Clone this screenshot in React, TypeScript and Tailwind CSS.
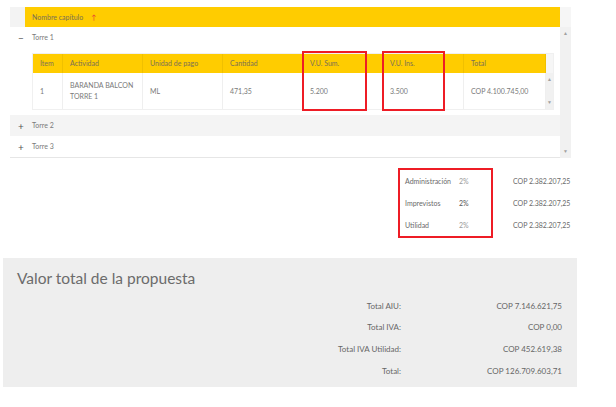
import React from "react";

const cols = [
  { title: "Item", w: "w-[30px]" },
  { title: "Actividad", w: "w-[80px]" },
  { title: "Unidad de pago", w: "w-[80px]" },
  { title: "Cantidad", w: "w-[80px]" },
  { title: "V.U. Sum.", w: "w-[80px]" },
  { title: "V.U. Ins.", w: "w-[81px]" },
  { title: "Total", w: "w-[82px]" },
];

const rowValues = ["1", "BARANDA BALCON TORRE 1", "ML", "471,35", "5.200", "3.500", "COP 4.100.745,00"];

const aiu = [
  { label: "Administración", pct: "2%", value: "COP 2.382.207,25" },
  { label: "Imprevistos", pct: "2%", value: "COP 2.382.207,25" },
  { label: "Utilidad", pct: "2%", value: "COP 2.382.207,25" },
];

const totals = [
  { label: "Total AIU:", value: "COP 7.146.621,75" },
  { label: "Total IVA:", value: "COP 0,00" },
  { label: "Total IVA Utilidad:", value: "COP 452.619,38" },
  { label: "Total:", value: "COP 126.709.603,71" },
];

function ScrollBar({ className }: { className?: string }) {
  return (
    <div className={`flex flex-col items-center justify-between bg-[#f1f1f1] ${className ?? ""}`}>
      <span className="text-[5px] leading-none text-[#a0a0a0]">▲</span>
      <span className="text-[5px] leading-none text-[#a0a0a0]">▼</span>
    </div>
  );
}

export default function App() {
  return (
    <div className="w-[616px] h-[407px] bg-white overflow-hidden text-[#7a7a7a]" style={{ fontFamily: "Lato, 'Open Sans', sans-serif" }}>
      {/* Capítulos */}
      <div className="ml-[10px] mt-[7px] w-[561px] flex">
        <div className="w-[550px] border-b border-[#e6e6e6]">
          <div className="flex h-[20px]">
            <div className="w-[15px] bg-[#f3f3f3]" />
            <div className="flex-1 bg-[#ffcc00] flex items-center pl-[7px] text-[7px] text-[#7a7056]">
              Nombre capítulo <span className="ml-[8px] text-[#e53935]">↑</span>
            </div>
          </div>

          <div className="flex items-center h-[21px] text-[7px]">
            <span className="w-[22px] text-center text-[10px] leading-none text-[#555]">−</span>
            <span>Torre 1</span>
          </div>

          <div className="pl-[22px] pr-[6px] pt-[5px] pb-[5px]">
            <div className="relative flex border border-[#f0f0f0]">
              <div className="flex-1">
                <div className="flex h-[19px] bg-[#ffcc00]">
                  {cols.map((c, i) => (
                    <div key={i} className={`${c.w} border-r border-[#f0c000] flex items-center pl-[7px] text-[7px] text-[#7a7056]`}>
                      {c.title}
                    </div>
                  ))}
                </div>
                <div className="flex h-[36px] bg-white">
                  {rowValues.map((v, i) => (
                    <div key={i} className={`${cols[i].w} border-r border-[#efefef] flex items-center pl-[7px] pr-[6px] text-[7px] leading-[11px]`}>
                      {v}
                    </div>
                  ))}
                </div>
              </div>
              <div className="w-[9px] flex flex-col">
                <div className="h-[19px] bg-[#f6f6f6]" />
                <ScrollBar className="flex-1 py-[4px]" />
              </div>
              <div className="absolute left-[269px] top-[-3px] w-[65px] h-[60px] border-2 border-[#ee1c25]" />
              <div className="absolute left-[349px] top-[-3px] w-[63px] h-[60px] border-2 border-[#ee1c25]" />
            </div>
          </div>

          <div className="flex items-center h-[21px] bg-[#f4f4f4] text-[7px]">
            <span className="w-[22px] text-center text-[10px] leading-none text-[#555]">+</span>
            <span>Torre 2</span>
          </div>
          <div className="flex items-center h-[21px] text-[7px]">
            <span className="w-[22px] text-center text-[10px] leading-none text-[#555]">+</span>
            <span>Torre 3</span>
          </div>
        </div>
        <div className="w-[11px] flex flex-col">
          <div className="h-[20px] bg-[#f6f6f6]" />
          <ScrollBar className="flex-1 py-[4px]" />
        </div>
      </div>

      {/* AIU */}
      <div className="mt-[10px] ml-[398px] flex">
        <div className="w-[95px] h-[70px] border-2 border-[#ee1c25] flex flex-col justify-center gap-[11px] pl-[5px] text-[7px]">
          {aiu.map((r, i) => (
            <div key={i} className="flex h-[11px] items-center">
              <span className="w-[54px] text-[#6a6a6a]">{r.label}</span>
              <span className={i === 1 ? "text-[#555]" : "text-[#9a9a9a]"}>{r.pct}</span>
            </div>
          ))}
        </div>
        <div className="flex flex-col justify-center gap-[11px] ml-[20px] text-[7px] text-[#6a6a6a]">
          {aiu.map((r, i) => (
            <div key={i} className="h-[11px] flex items-center">{r.value}</div>
          ))}
        </div>
      </div>

      {/* Valor total */}
      <div className="mt-[20px] ml-[3px] w-[574px] h-[129px] bg-[#eeeeee] pt-[10px]">
        <div className="pl-[14px] text-[15.5px] leading-[20px] text-[#6b6b6b]">Valor total de la propuesta</div>
        <div className="mt-[12px] flex flex-col gap-[10.7px]">
          {totals.map((t, i) => (
            <div key={i} className="flex h-[11px] items-center text-[8px] text-[#666]">
              <span className="w-[398px] text-right">{t.label}</span>
              <span className="w-[161px] text-right">{t.value}</span>
            </div>
          ))}
        </div>
      </div>
    </div>
  );
}
